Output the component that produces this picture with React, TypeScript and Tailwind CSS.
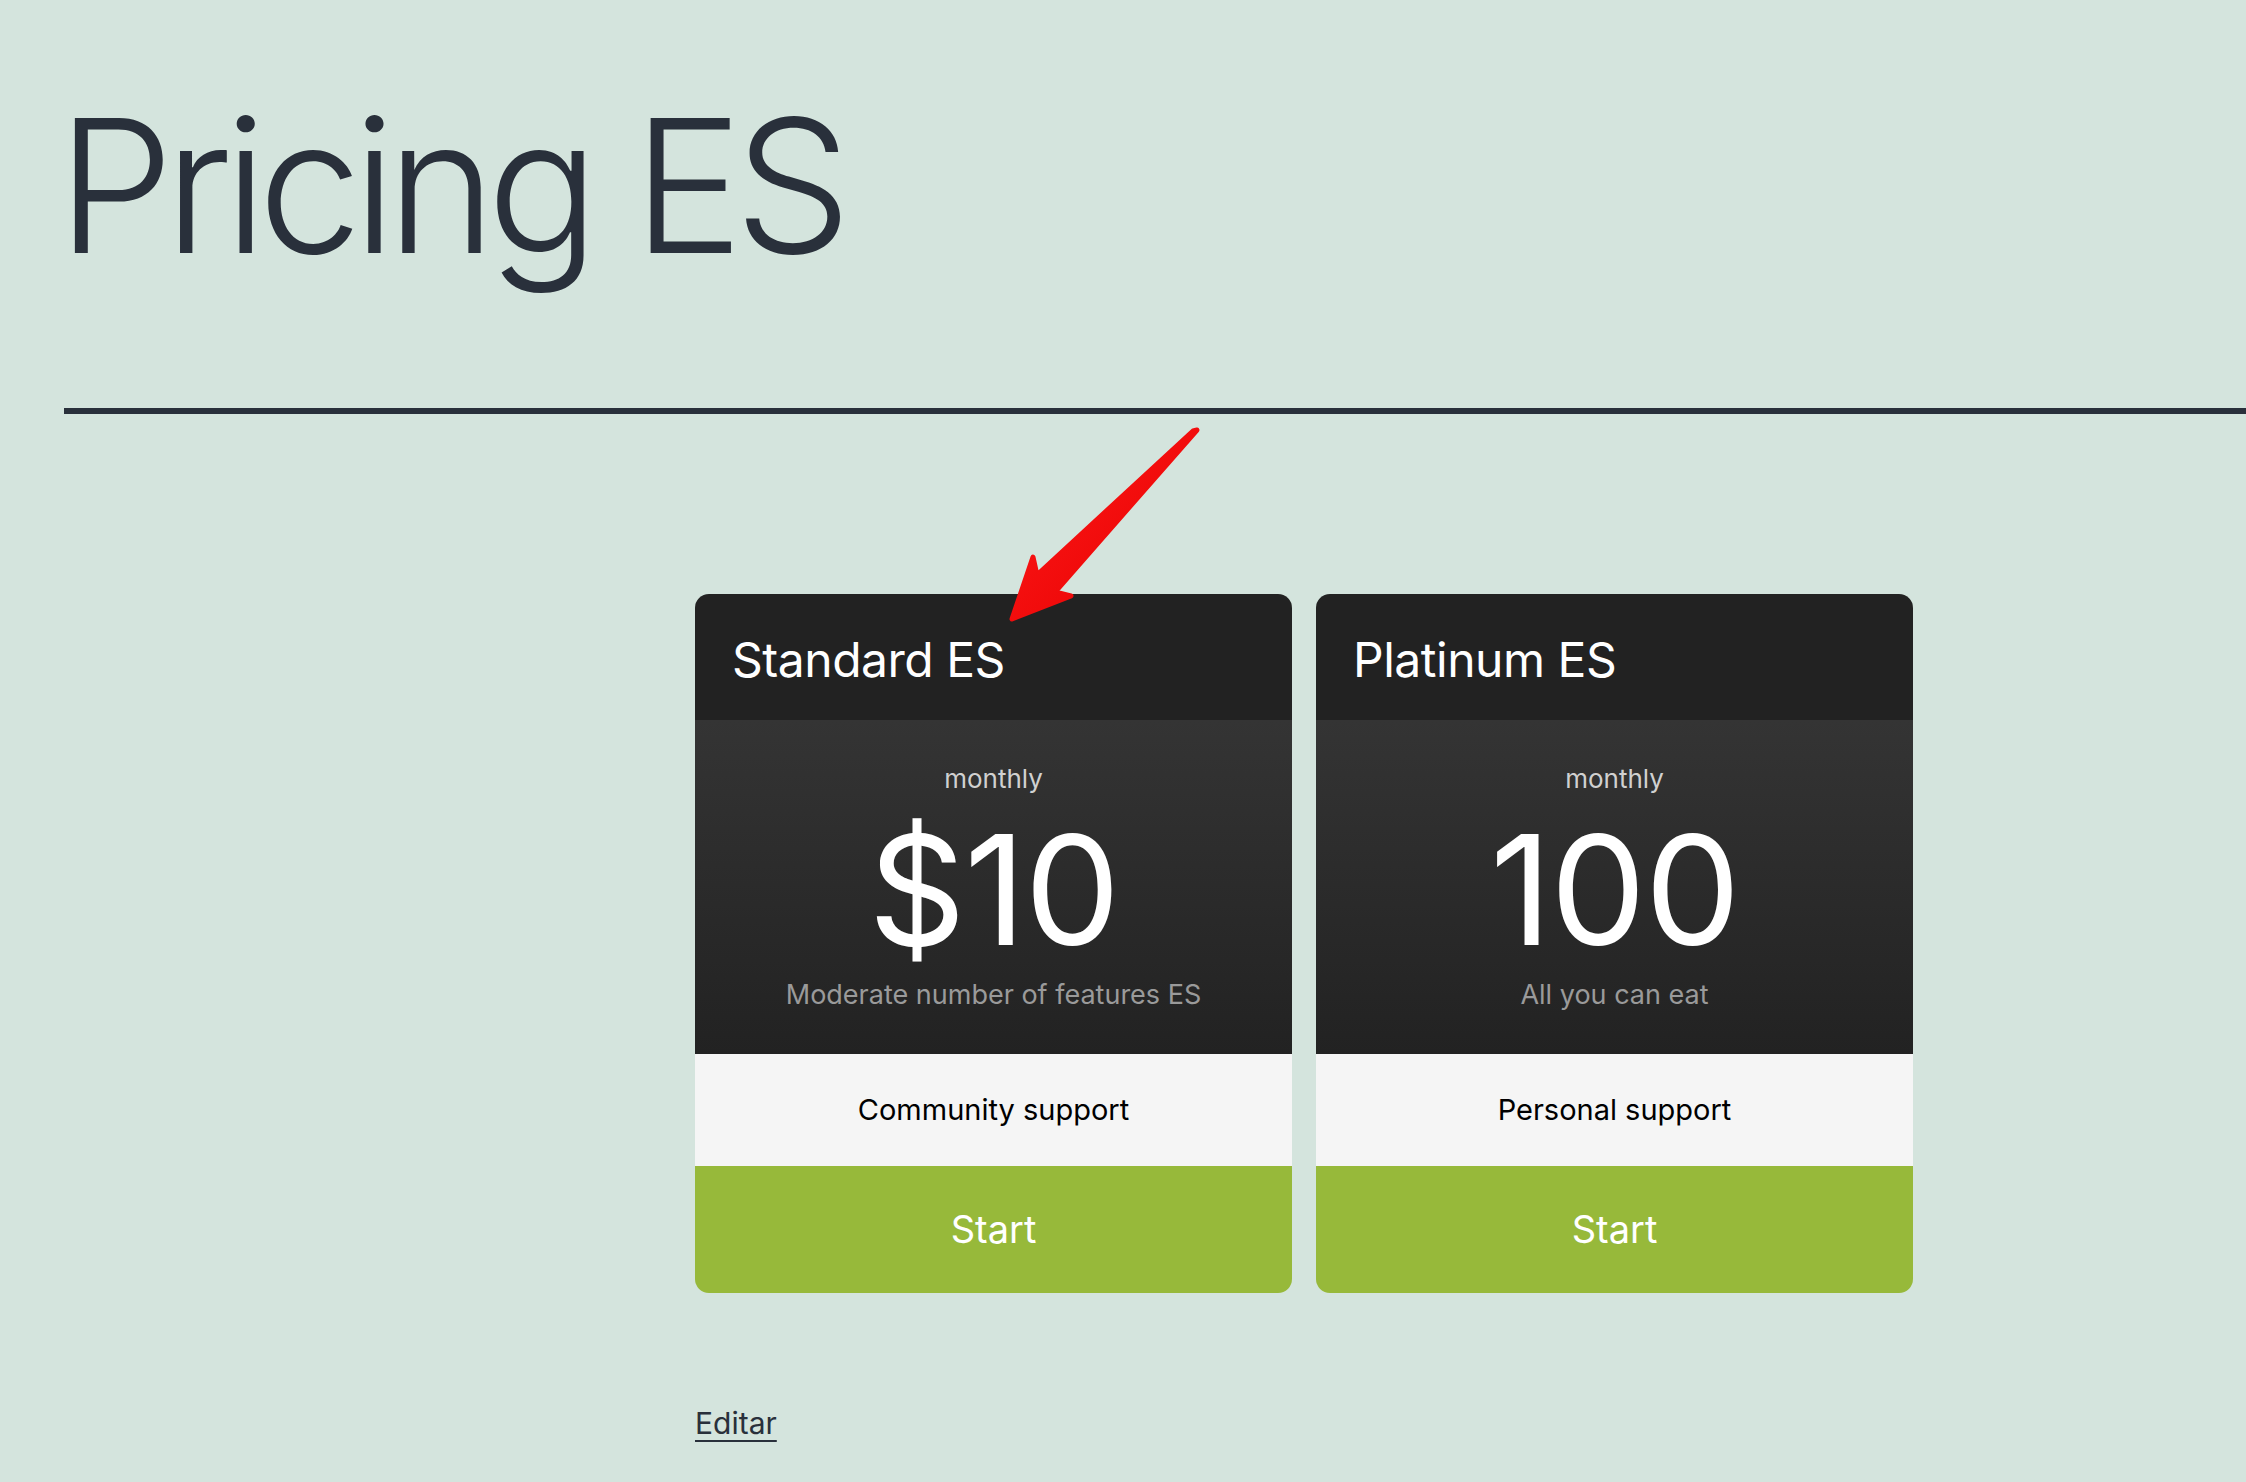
import React from 'react';

const plans = [
  { name: 'Standard ES', price: '$10', blurb: 'Moderate number of features ES', feature: 'Community support' },
  { name: 'Platinum ES', price: '100', blurb: 'All you can eat', feature: 'Personal support' },
];

const Arrow = () => (
  <svg className="absolute left-0 top-0 pointer-events-none" width="2246" height="700" viewBox="0 0 2246 700">
    <defs>
      <linearGradient id="arrowRed" x1="0" y1="0" x2="1" y2="1">
        <stop offset="0" stopColor="#ff1a1a" />
        <stop offset="1" stopColor="#e60000" />
      </linearGradient>
    </defs>
    <polygon
      points="1197,430 1055,592 1071,596 1012,619 1033,557 1037,575 1193,431"
      fill="url(#arrowRed)"
      stroke="url(#arrowRed)"
      strokeWidth="5"
      strokeLinejoin="round"
    />
  </svg>
);

const App = () => {
  return (
    <div className="relative min-h-[1482px] bg-[#d4e4dd] text-[#29303b] font-['Inter',sans-serif] overflow-hidden">
      <div className="pl-16 pt-[74px]">
        <h1 className="-ml-[7px] text-[186px] leading-[1.2] font-light tracking-[-0.05em] text-[#29303b]">Pricing ES</h1>
        <div className="mt-[111px] h-[6px] bg-[#29303b]" />
      </div>

      <div className="pl-[695px] pt-[180px]">
        <div className="flex gap-6">
          {plans.map(plan => (
            <div key={plan.name} className="w-[597px] rounded-[14px] overflow-hidden">
              <div className="h-[126px] bg-[#222222] px-[37px] pt-[42px]">
                <h2 className="text-[48px] leading-none font-normal text-white tracking-[-0.01em]">{plan.name}</h2>
              </div>
              <div className="h-[334px] bg-gradient-to-b from-[#343434] to-[#222222] flex flex-col items-center pt-[46px]">
                <div className="text-[26px] leading-none text-[#d0d0d0]">monthly</div>
                <div className="mt-[22px] text-[152px] leading-none text-white tracking-[-0.01em]">{plan.price}</div>
                <div className="mt-[15px] text-[27px] leading-none text-[#9a9a9a]">{plan.blurb}</div>
              </div>
              <div className="h-[112px] bg-[#f5f5f5] flex items-center justify-center">
                <span className="text-[29px] text-black">{plan.feature}</span>
              </div>
              <div className="h-[127px] bg-[#97b93a] flex items-center justify-center">
                <span className="text-[38px] text-white">Start</span>
              </div>
            </div>
          ))}
        </div>
        <div className="mt-[108px]">
          <a href="#" className="text-[30px] text-[#29303b] underline decoration-2 underline-offset-[6px]">Editar</a>
        </div>
      </div>

      <Arrow />
    </div>
  );
};

export default App;
